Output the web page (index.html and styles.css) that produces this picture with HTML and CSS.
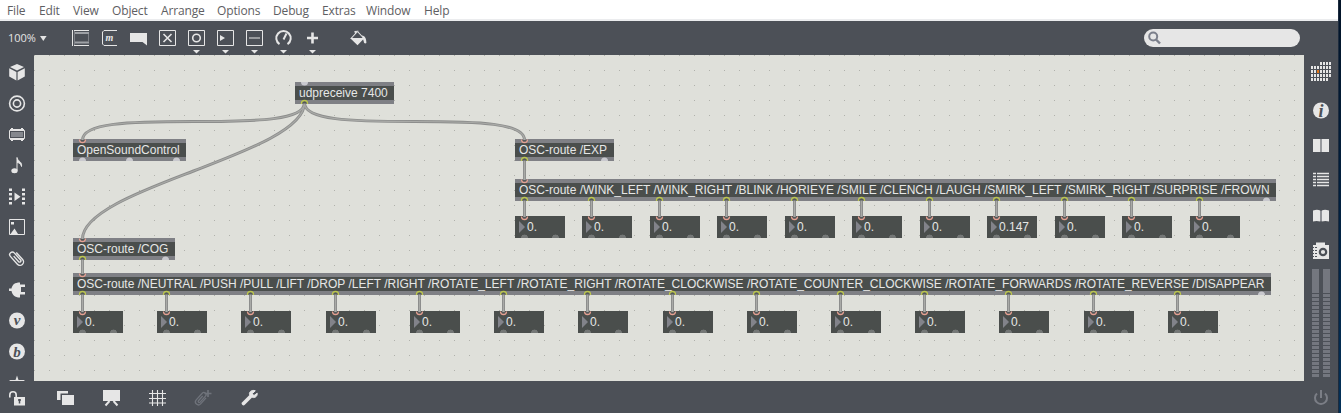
FILE: index.html
```html
<!DOCTYPE html>
<html lang="en">
<head>
<meta charset="utf-8">
<title>Patcher</title>
<link rel="stylesheet" href="styles.css">
</head>
<body>
<div class="app">
  <nav class="menubar">
    <span>File</span><span>Edit</span><span>View</span><span>Object</span><span>Arrange</span><span>Options</span><span>Debug</span><span>Extras</span><span>Window</span><span>Help</span>
  </nav>

  <header class="toolbar">
    <div class="zoom">100%<svg width="7" height="5"><path d="M0 0h6.6L3.3 5z" fill="#e4e4e4"/></svg></div>
    <div class="tools">
      <svg class="tool" viewBox="0 0 29 34"><path d="M6.500 9v16" stroke="#e6e6e6"/><path d="M8 9.500h15M8 24.500h15" stroke="#e6e6e6"/><path d="M9 12h14M9 21.500h14" stroke="#9da0a5" stroke-width="2"/><path d="M8.500 10v14M22.500 13v8" stroke="#7d8086"/></svg>
      <svg class="tool" viewBox="0 0 29 34"><path d="M22 9.500H9L7.500 11v12L9 24.500H22" fill="none" stroke="#e6e6e6"/><text x="10.600" y="20" class="glyph-m">m</text></svg>
      <svg class="tool" viewBox="0 0 29 34"><path d="M6 12h17v12.500L18.500 21H6z" fill="#e6e6e6"/></svg>
      <svg class="tool" viewBox="0 0 29 34"><path class="ln" d="M6.500 9.500h16v15h-16z"/><path class="ln2" d="M10.500 13l8 8M18.500 13l-8 8"/></svg>
      <svg class="tool" viewBox="0 0 29 34"><path class="ln" d="M6.500 9.500h16v15h-16z"/><circle class="ln2" cx="14.500" cy="17" r="3.800"/><path class="fl" d="M11 29h7l-3.500 3.500z"/></svg>
      <svg class="tool" viewBox="0 0 29 34"><path class="ln" d="M6.500 9.500h16v15h-16z"/><path class="fl" d="M9 14l5 3-5 3zM11 29h7l-3.500 3.500z"/></svg>
      <svg class="tool" viewBox="0 0 29 34"><path class="ln" d="M6.500 9.500h16v15h-16zM9 17h11"/><path class="fl" d="M11 29h7l-3.500 3.500z"/></svg>
      <svg class="tool" viewBox="0 0 29 34"><path d="M10.500 23.200A7.200 7.200 0 1 1 18.500 23.200M14.500 18.500l3-6" fill="none" stroke="#e6e6e6" stroke-width="2"/><path class="fl" d="M11 29h7l-3.500 3.500z"/></svg>
      <svg class="tool" viewBox="0 0 29 34"><path d="M9 17h11M14.500 11.500v11" stroke="#e6e6e6" stroke-width="2.600"/><path class="fl" d="M11 29h7l-3.500 3.500z"/></svg>
    </div>
    <svg class="bucket" viewBox="0 0 29 34"><path d="M7 17.500l6.500-7 6.500 7M11.500 12.500l-.5-2 3.500-.3" fill="none" stroke="#e6e6e6" stroke-width="1.100"/><path class="fl" d="M6 17h14.500l-7 7.200zM18 14.500c3 .3 4.400 3 4.400 7.500-1.300 1-2.400.2-2.600-1.200z"/></svg>
    <div class="search"><svg width="16" height="16" viewBox="0 0 16 16"><circle cx="5.200" cy="6.500" r="4" fill="none" stroke="#7b7f8b" stroke-width="2"/><path d="M8 9.500l4 4" stroke="#7b7f8b" stroke-width="2.400"/></svg></div>
  </header>

  <aside class="left">
    <svg viewBox="0 0 34 31"><path class="fl" d="M17 7l7 3-7 3.600L10 10zM9.200 11.200l7.200 3.700v8.500l-7.200-3.900zM24.800 11.200l-7.200 3.700v8.500l7.200-3.900z"/></svg>
    <svg viewBox="0 0 34 31"><circle cx="17" cy="15.500" r="7.400" class="ln2"/><circle cx="17" cy="15.500" r="3.600" class="ln2"/></svg>
    <svg viewBox="0 0 34 31"><path class="ln" d="M9.500 11.500h15v8h-15z"/><path d="M11 13h12v5H11z" fill="#85888e"/><path class="fl" d="M10 10h14v1H10zM11 9h2v1h-2zM21 9h2v1h-2zM10 20h14v1H10zM11 21h2v1h-2zM21 21h2v1h-2z"/></svg>
    <svg viewBox="0 0 34 31"><ellipse class="fl" cx="14.500" cy="20.800" rx="3.200" ry="2.500"/><path d="M17 20.500V7.500c.5 4 5.500 4 4.500 9-.6-2.700-2.500-3.800-4.500-4" fill="#e6e6e6" stroke="#e6e6e6"/></svg>
    <svg viewBox="0 0 34 31"><path d="M10.500 7.500v17M23.500 7.500v17" stroke="#e6e6e6" stroke-width="3" stroke-dasharray="2.500 2"/><path class="fl" d="M14.500 11.500l6 4.200-6 4.200z"/></svg>
    <svg viewBox="0 0 34 31"><path class="ln" d="M9.500 7.500h15v15h-15z"/><path class="fl" d="M10.500 22l4-5.500 3.500 5.500zM11 10h3v2.500h-3z"/></svg>
    <svg viewBox="0 0 34 31"><path transform="translate(17 15.500) rotate(-42)" d="M3.500-5v9.500a3.500 3.500 0 0 1-7 0v-10.500a2.600 2.600 0 0 1 5.200 0v9.500a1.300 1.300 0 0 1-2.600 0V-4" fill="none" stroke="#e6e6e6" stroke-width="1.400"/></svg>
    <svg viewBox="0 0 34 31"><path class="fl" d="M9 14.500h2.500c1-4 3-6 8.500-6V10.500h5V13h-4v5h4v2.500h-5v3c-5.500 0-7.500-2.500-8.500-6.500H9z"/></svg>
    <svg viewBox="0 0 34 31"><circle class="fl" cx="17" cy="15.500" r="8"/><text x="17" y="20" class="badge">v</text></svg>
    <svg viewBox="0 0 34 31"><circle class="fl" cx="17" cy="15.500" r="8"/><text x="17" y="20.500" class="badge">b</text></svg>
    <svg viewBox="0 0 34 31"><path class="fl" d="M17 8.500l1.500 4.500H25l-5 4 2 6-5-3.500-5 3.500 2-6-5-4h6.500z"/></svg>
  </aside>

  <main class="patcher">
    <div class="obj" style="left:261px;top:27px;width:99px">udpreceive 7400</div>
    <div class="obj" style="left:39px;top:84px;width:113px">OpenSoundControl</div>
    <div class="obj" style="left:481px;top:84px;width:99px">OSC-route /EXP</div>
    <div class="obj" style="left:481px;top:124px;width:761px">OSC-route /WINK_LEFT /WINK_RIGHT /BLINK /HORIEYE /SMILE /CLENCH /LAUGH /SMIRK_LEFT /SMIRK_RIGHT /SURPRISE /FROWN</div>
    <div class="obj" style="left:39px;top:183px;width:102px">OSC-route /COG</div>
    <div class="obj" style="left:39px;top:218px;width:1198px">OSC-route /NEUTRAL /PUSH /PULL /LIFT /DROP /LEFT /RIGHT /ROTATE_LEFT /ROTATE_RIGHT /ROTATE_CLOCKWISE /ROTATE_COUNTER_CLOCKWISE /ROTATE_FORWARDS /ROTATE_REVERSE /DISAPPEAR</div>

    <div class="num exp" style="left:481px">0.</div>
    <div class="num exp" style="left:548px">0.</div>
    <div class="num exp" style="left:616px">0.</div>
    <div class="num exp" style="left:683px">0.</div>
    <div class="num exp" style="left:751px">0.</div>
    <div class="num exp" style="left:818px">0.</div>
    <div class="num exp" style="left:886px">0.</div>
    <div class="num exp" style="left:953px">0.147</div>
    <div class="num exp" style="left:1021px">0.</div>
    <div class="num exp" style="left:1088px">0.</div>
    <div class="num exp" style="left:1156px">0.</div>

    <div class="num cog" style="left:39px">0.</div>
    <div class="num cog" style="left:123px">0.</div>
    <div class="num cog" style="left:207px">0.</div>
    <div class="num cog" style="left:292px">0.</div>
    <div class="num cog" style="left:376px">0.</div>
    <div class="num cog" style="left:460px">0.</div>
    <div class="num cog" style="left:544px">0.</div>
    <div class="num cog" style="left:629px">0.</div>
    <div class="num cog" style="left:713px">0.</div>
    <div class="num cog" style="left:797px">0.</div>
    <div class="num cog" style="left:881px">0.</div>
    <div class="num cog" style="left:965px">0.</div>
    <div class="num cog" style="left:1050px">0.</div>
    <div class="num cog" style="left:1134px">0.</div>

    <svg class="cables" viewBox="34 55 1270 326">
      <defs>
        <path id="free" d="M-3.500 0a3.500 3.500 0 0 1 7 0z" fill="#c9c9ce"/>
        <g id="out"><path d="M-2.500-.5a2.500 2.500 0 0 1 5 0z" fill="#55595a"/><path d="M-3 0v-.5a3 3 0 0 1 6 0V0" fill="none" stroke="#bcc64d" stroke-width="1.300"/></g>
        <g id="in"><path d="M-2.500 .5a2.500 2.500 0 0 0 5 0z" fill="#55595a"/><path d="M-3 0a3 3 0 0 0 6 0" fill="none" stroke="#e5a092" stroke-width="1.300"/></g>
        <g id="e"><path d="M0 200v17" stroke="#8d8e8d" stroke-width="3"/><path d="M0 200v17" stroke="#a9aaa7"/><use href="#out" y="201"/><use href="#in" y="216.500"/></g>
        <g id="c"><path d="M0 294v18" stroke="#8d8e8d" stroke-width="3"/><path d="M0 294v18" stroke="#a9aaa7"/><use href="#out" y="295"/><use href="#in" y="311.500"/></g>
        <g id="curves" fill="none">
          <path d="M304.500 103C304.500 120 259 121.500 193.500 121.500S82.500 123 82.500 140"/>
          <path d="M304.500 103C304.500 130 240 153 193.500 171S82.500 212 82.500 239"/>
          <path d="M304.500 103C304.500 120 350 121.500 414.500 121.500S524.500 123 524.500 140"/>
          <path d="M524.500 160v20M82.500 259v15"/>
        </g>
      </defs>
      <use href="#curves" stroke="#8d8e8d" stroke-width="3"/>
      <use href="#curves" stroke="#a9aaa7" stroke-width="1.200"/>
      <use href="#out" x="304.500" y="104"/><use href="#out" x="524.500" y="161"/><use href="#out" x="82.500" y="260"/>
      <use href="#in" x="82.500" y="139.500"/><use href="#in" x="82.500" y="238.500"/><use href="#in" x="524.500" y="139.500"/><use href="#in" x="524.500" y="179.500"/><use href="#in" x="82.500" y="273.500"/>
      <path d="M301 82a3.500 3.500 0 0 0 7 0z" fill="#c9c9ce"/>
      <use href="#free" x="82.500" y="161"/><use href="#free" x="129.500" y="161"/><use href="#free" x="176.500" y="161"/><use href="#free" x="604.500" y="161"/><use href="#free" x="165.500" y="260"/><use href="#free" x="1266.500" y="201"/><use href="#free" x="1261.500" y="295"/>
      <use href="#e" x="524.500"/><use href="#e" x="591.500"/><use href="#e" x="659.500"/><use href="#e" x="726.500"/><use href="#e" x="794.500"/><use href="#e" x="861.500"/><use href="#e" x="929.500"/><use href="#e" x="996.500"/><use href="#e" x="1064.500"/><use href="#e" x="1131.500"/><use href="#e" x="1199.500"/>
      <use href="#c" x="82.500"/><use href="#c" x="166.500"/><use href="#c" x="250.500"/><use href="#c" x="335.500"/><use href="#c" x="419.500"/><use href="#c" x="503.500"/><use href="#c" x="587.500"/><use href="#c" x="672.500"/><use href="#c" x="756.500"/><use href="#c" x="840.500"/><use href="#c" x="924.500"/><use href="#c" x="1008.500"/><use href="#c" x="1093.500"/><use href="#c" x="1177.500"/>
    </svg>
  </main>

  <aside class="right">
    <svg class="grid-ic" viewBox="0 0 34 38"><g stroke="#e6e6e6" stroke-width="3" stroke-dasharray="2 1"><path d="M16 8.500h11M7 12.500h20M7 16.500h20M7 20.500h20M7 24.500h17"/></g><path d="M13 15h2v3h-2z" fill="#e0761b"/></svg>
    <svg viewBox="0 0 34 35"><circle class="fl" cx="17" cy="17.500" r="8"/><text x="17" y="23.500" class="badge info">i</text></svg>
    <svg viewBox="0 0 34 35"><path class="fl" d="M9 11h7.400v13H9zM17.600 11H25v13h-7.400z"/><path d="M17 11v13" stroke="#a4a6ab"/></svg>
    <svg viewBox="0 0 34 35"><path d="M9 10.500h3M13 10.500h12M9 13.500h3M13 13.500h12M9 16.500h3M13 16.500h12M9 19.500h3M13 19.500h12M9 22.500h3M13 22.500h12" stroke="#e6e6e6" stroke-width="1.500"/></svg>
    <svg viewBox="0 0 34 35"><path class="fl" d="M9 12.500c3-1 5-1 7.300 0v11c-2.500-.8-5-.8-7.300 0zM25 12.500c-3-1-5-1-7.300 0v11c2.500-.8 5-.8 7.300 0z"/><path d="M17 13v10" stroke="#a4a6ab"/></svg>
    <svg viewBox="0 0 34 35"><path class="fl" d="M12 12V9.500h9V12h4v14H9V12z"/><path d="M9 14.500h4M9 17.500h4M9 20.500h4M9 23.500h4" stroke="#4c5057" stroke-width="1.200"/><path class="fl" d="M10 12h1v14h-1z"/><circle cx="19" cy="19" r="3.200" fill="#e6e6e6" stroke="#4c5057" stroke-width="2.200"/></svg>
    <div class="meters"><div class="meter"></div><div class="meter"></div></div>
    <svg class="power" viewBox="0 0 34 34"><path d="M13 12.500a6 6 0 1 0 8 0M17 9v8" fill="none" stroke="#7b7e86" stroke-width="2"/></svg>
  </aside>

  <footer class="bottombar">
    <svg class="lock" viewBox="0 0 42 32"><path class="fl" d="M14 16h11v8.500H14z"/><path d="M9.800 16.500v-2.500a3.200 3.200 0 0 1 6.400 0V17" fill="none" stroke="#e6e6e6" stroke-width="1.600"/><path d="M19.500 18v4.500M18 19h3" stroke="#4c5057" stroke-width="1.500"/></svg>
    <svg viewBox="0 0 46 32"><path class="fl" d="M15 10h11v2.500h-7.500V19H15z"/><path class="fl" d="M20 14h12v10H20z"/></svg>
    <svg viewBox="0 0 46 32"><path class="fl" d="M15 9h17v11H15z"/><path d="M21.500 20l-4 4.500M25.500 20l4 4.500" stroke="#e6e6e6" stroke-width="2"/></svg>
    <svg viewBox="0 0 46 32"><path d="M18.500 9v16M23.500 9v16M28.500 9v16M15 12.500h17M15 17.500h17M15 22h17" stroke="#e6e6e6" stroke-width="1.100"/></svg>
    <svg viewBox="0 0 46 32"><path transform="translate(21 18) rotate(42) scale(.85)" d="M3.500-5v9.500a3.500 3.500 0 0 1-7 0v-10.500a2.600 2.600 0 0 1 5.200 0v9.500a1.300 1.300 0 0 1-2.600 0V-4" fill="none" stroke="#6f737b" stroke-width="1.500"/><path d="M28 9v7M24.500 12.500h7" stroke="#6f737b" stroke-width="1.700"/></svg>
    <svg viewBox="0 0 46 32"><path d="M17.500 22.500l8-8" stroke="#e6e6e6" stroke-width="3.800" stroke-linecap="round"/><path d="M29.300 9.800l-3 2.800 1.300 2.200 3.600-2.600c.4 3-2.200 5-4.700 4.200l-3-3c-.7-2.500 2.300-5 5.800-3.600z" fill="#e6e6e6" stroke="#e6e6e6"/></svg>
  </footer>
  <div class="edge"></div>
</div>
</body>
</html>
```
FILE: styles.css
```css
* { box-sizing: border-box; }
body { margin: 0; width: 1341px; height: 413px; overflow: hidden; font-family: "Liberation Sans", Arial, sans-serif; }
svg { display: block; flex: none; }

.app {
  display: grid;
  grid-template: 21px 34px 326px 32px / 34px 1270px 34px 3px;
  width: 1341px;
  height: 413px;
  background: #4c5057;
}

.menubar {
  grid-area: 1 / 1 / 2 / 4;
  display: grid;
  grid-template-columns: 32px 34px 39px 49px 56px 56px 49px 44px 58px 40px;
  padding-left: 7px;
  background: #fff;
  border-bottom: 2px solid #ebecee;
  color: #5e5e62;
  font: 12px/21px "Open Sans", "Noto Sans", sans-serif;
  letter-spacing: -0.15px;
}
.menubar span { white-space: nowrap; }

.toolbar { grid-area: 2 / 1 / 3 / 4; display: flex; align-items: center; }
.zoom {
  display: flex;
  align-items: center;
  gap: 5px;
  width: 66px;
  padding-left: 8px;
  color: #e4e4e4;
  font: 11px/34px "Open Sans", "Noto Sans", sans-serif;
}
.zoom svg { margin-left: -1px; }
.tools { display: flex; }
.tool, .bucket { width: 29px; height: 34px; }
.bucket { margin-left: 17px; }
.search {
  display: flex;
  align-items: center;
  width: 156px;
  height: 18px;
  margin-left: auto;
  margin-right: 38px;
  padding-left: 4px;
  border-radius: 9px;
  background: #e6e6e6;
}

.ln { fill: none; stroke: #e6e6e6; }
.ln2 { fill: none; stroke: #e6e6e6; stroke-width: 1.6; }
.fl { fill: #e6e6e6; }
.glyph-m { font: italic bold 10px "Liberation Serif", serif; fill: #e6e6e6; }
.badge { font: italic bold 15px "Liberation Serif", serif; fill: #4c5057; text-anchor: middle; }
.info { font-size: 18px; }

.left { grid-area: 3 / 1 / 4 / 2; padding-top: 2px; overflow: hidden; }
.left svg { width: 34px; height: 31px; }

.right { grid-area: 3 / 3 / 5 / 4; display: flex; flex-direction: column; }
.right svg { width: 34px; height: 35px; }
.right .grid-ic { height: 38px; }
.right .power { height: 34px; margin-top: 4px; }
.meters { display: flex; gap: 4px; padding: 1px 0 0 8px; }
.meter {
  width: 7px;
  height: 108px;
  background:
    linear-gradient(#74777f, #74777f) 0 0 / 100% 24px no-repeat,
    repeating-linear-gradient(transparent 0 1px, #74777f 1px 4px);
}

.bottombar { grid-area: 4 / 1 / 5 / 3; display: flex; }
.bottombar svg { width: 46px; height: 32px; }
.bottombar .lock { width: 42px; }
.edge { grid-area: 1 / 4 / 5 / 5; background: linear-gradient(#031428, #01203f 50%, #023058); border-left: 1px solid #1d2b3d; }

.patcher {
  grid-area: 3 / 2 / 4 / 3;
  position: relative;
  overflow: hidden;
  background-color: #dfe0da;
  background-image: conic-gradient(from 270deg at 1px 1px, #b0b1ab 90deg, transparent 0);
  background-size: 15px 15px;
}
.obj {
  position: absolute;
  height: 22px;
  padding-left: 4px;
  border: solid #7f8085;
  border-width: 4px 0;
  background: #4a4e4c;
  color: #e6e7e6;
  font-size: 12px;
  line-height: 14px;
  white-space: nowrap;
}
.num {
  position: absolute;
  width: 50px;
  height: 22px;
  padding-left: 12px;
  background:
    radial-gradient(circle at 9.5px 22px, #747776 3.2px, transparent 3.7px),
    radial-gradient(circle at 40.5px 22px, #747776 3.2px, transparent 3.7px),
    #4a4e4c;
  color: #e6e7e6;
  font-size: 12px;
  line-height: 22px;
}
.num::before {
  content: "";
  position: absolute;
  left: 4px;
  top: 5px;
  border: solid transparent;
  border-width: 6px 0 6px 6px;
  border-left-color: #82838a;
}
.exp { top: 161px; }
.cog { top: 256px; }
.cables { position: absolute; inset: 0; width: 1270px; height: 326px; }
```
